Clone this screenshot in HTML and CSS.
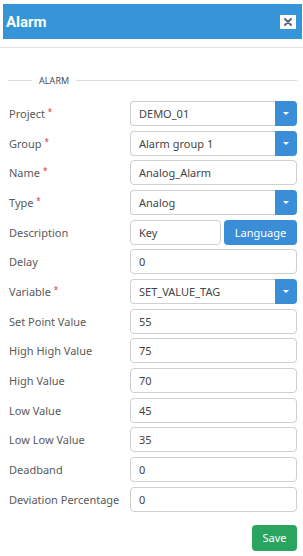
FILE: index.html
```html
<!DOCTYPE html>
<html>
<head>
<meta charset="utf-8">
<link rel="stylesheet" href="styles.css">
</head>
<body>
<div class="modal">
  <div class="header">
    <span class="title">Alarm</span>
    <span class="close"><svg width="16" height="14" viewBox="0 0 16 14"><path d="M5 4 L11 10 M11 4 L5 10" stroke="#56697b" stroke-width="2" stroke-linecap="round"/></svg></span>
  </div>
  <div class="sep"></div>
  <div class="body">
    <div class="legend"><span class="ln short"></span><span class="lg">ALARM</span><span class="ln"></span></div>
    <div class="form">
      <div class="lbl">Project <i>*</i></div>
      <div class="sel"><div class="inp">DEMO_01</div><div class="btn"><span class="caret"></span></div></div>
      <div class="lbl">Group <i>*</i></div>
      <div class="sel"><div class="inp">Alarm group 1</div><div class="btn"><span class="caret"></span></div></div>
      <div class="lbl">Name <i>*</i></div>
      <div class="inp">Analog_Alarm</div>
      <div class="lbl">Type <i>*</i></div>
      <div class="sel"><div class="inp">Analog</div><div class="btn"><span class="caret"></span></div></div>
      <div class="lbl">Description</div>
      <div class="desc"><div class="inp">Key</div><div class="lang">Language</div></div>
      <div class="lbl">Delay</div>
      <div class="inp">0</div>
      <div class="lbl">Variable <i>*</i></div>
      <div class="sel"><div class="inp">SET_VALUE_TAG</div><div class="btn"><span class="caret"></span></div></div>
      <div class="lbl">Set Point Value</div>
      <div class="inp">55</div>
      <div class="lbl">High High Value</div>
      <div class="inp">75</div>
      <div class="lbl">High Value</div>
      <div class="inp">70</div>
      <div class="lbl">Low Value</div>
      <div class="inp">45</div>
      <div class="lbl">Low Low Value</div>
      <div class="inp">35</div>
      <div class="lbl">Deadband</div>
      <div class="inp">0</div>
      <div class="lbl">Deviation Percentage</div>
      <div class="inp">0</div>
    </div>
    <div class="footer"><span class="save">Save</span></div>
  </div>
</div>
</body>
</html>
```
FILE: styles.css
```css
html, body { margin: 0; padding: 0; background: #fff; }
body { width: 303px; height: 556px; overflow: hidden; font-family: "Noto Sans", "Open Sans", sans-serif; color: #555; }
.modal { padding-top: 4px; }
.header {
  margin: 0 1px 0 3px; height: 35px; background: #3595d6;
  display: flex; align-items: center; justify-content: space-between;
  padding: 0 6px 0 3px;
}
.title { font-family: Roboto, "Liberation Sans", sans-serif; font-weight: 700; font-size: 15px; color: #fff; }
.close { width: 16px; height: 14px; background: #fff; display: block; }
.close svg { display: block; }
.sep { height: 1px; background: #e2e2e2; margin-top: 8px; }
.body { padding: 0 6px 0 9px; }
.legend { display: flex; align-items: center; margin-top: 27px; height: 10px; }
.ln { flex: 1; height: 1px; background: #ddd; }
.ln.short { flex: 0 0 24px; margin-left: -1px; }
.lg { font-family: "Open Sans", sans-serif; font-size: 9px; color: #444; padding: 0 7px 0 7px; letter-spacing: 0.1px; }
.form {
  display: grid; grid-template-columns: 121px 167px; grid-auto-rows: 25px; row-gap: 4.67px;
  margin-top: 16px; align-items: center;
}
.lbl { font-size: 11px; color: #5a5a5a; white-space: nowrap; }
.lbl i { font-style: normal; color: #d9304a; font-size: 8px; position: relative; top: -3px; }
.inp {
  box-sizing: border-box; height: 25px; border: 1px solid #cfcfcf; border-radius: 4px;
  padding: 0 8px; font-size: 11px; color: #444; line-height: 23px; background: #fff;
}
.sel { display: flex; height: 25px; }
.sel .inp { flex: 1; border-right: none; border-radius: 4px 0 0 4px; }
.btn {
  width: 22px; background: #3a8ed8; border-radius: 0 4px 4px 0;
  display: flex; align-items: center; justify-content: center;
}
.caret { width: 0; height: 0; border-left: 3px solid transparent; border-right: 3px solid transparent; border-top: 3px solid #fff; }
.desc { display: flex; gap: 3px; height: 25px; }
.desc .inp { flex: 0 0 91px; }
.lang {
  flex: 1; background: #3a8ed8; color: #fff; border-radius: 4px; font-size: 11px;
  display: flex; align-items: center; justify-content: center;
}
.footer { display: flex; justify-content: flex-end; margin-top: 13px; padding-right: 0; }
.save {
  width: 45px; height: 26px; background: #2aa55f; color: #fff; border-radius: 4px;
  font-size: 11px; display: flex; align-items: center; justify-content: center;
}
```
